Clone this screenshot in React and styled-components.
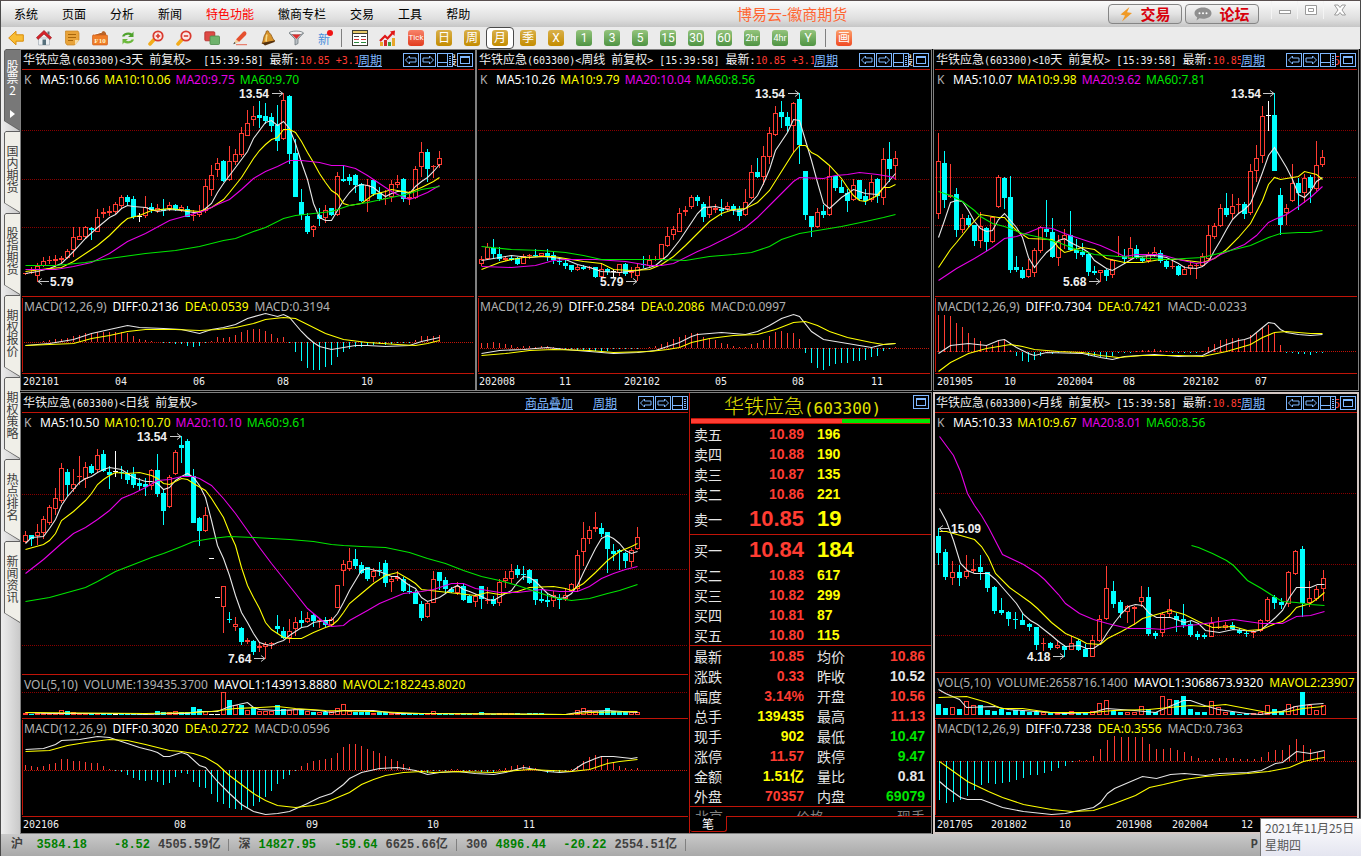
import React from 'react'
import styled, { createGlobalStyle, css } from 'styled-components';

const RED = '#ff3c32';
const CYAN = '#00ffff';
const YELLOW = '#ffff00';
const GREEN = '#00e600';
const MAGENTA = '#e600e6';
const WHITE = '#e6e6e6';
const GREY = '#b0b0b0';
const LINE = '#c01408';
const BLUE = '#7fb8ff';

// Chart figures are kept on a grid three times finer than the screen.
const px = (v) => Math.round(v / 3);

/* ---------- chart data ---------- */
// candle: colour, high, body top, body bottom, low

const threeDay = {
    period: '3天 前复权> ',
    x: 76, step: 18, left: 22,
    legend: ['10.66', '10.06', '9.75', '9.70'],
    candles: `r668,668,671,674 r650,666,668,672 r640,649,678,695 r622,633,648,650 r618,630,633,642 r615,628,632,650 r618,624,630,640 r598,603,625,628 r531,562,600,620 r532,559,569,571
        r528,532,560,566 c531,534,539,570 r477,500,545,546 r474,487,493,505 r468,484,489,497 r455,463,487,491 r435,441,469,474 c435,441,455,466 c438,447,500,506 w490,498,500,516
        r438,472,497,503 c458,472,480,490 r462,475,482,490 c447,478,482,497 r456,465,478,482 c461,466,480,484 r464,472,480,486 c468,478,500,502 r480,494,499,512 r465,485,494,500
        r388,409,482,488 r345,374,421,438 r323,340,361,380 c330,333,392,395 r288,333,391,392 r297,313,335,345 r230,250,314,320 r180,220,257,258 r168,199,209,228 c152,195,204,234
        c160,198,212,222 c190,201,228,246 c165,226,272,302 r130,151,266,270 c134,138,311,342 c268,310,440,441 c416,456,494,510 c490,498,545,552 r525,529,539,560 c474,495,507,528
        r466,481,503,518 c474,475,494,498 r366,377,494,497 c346,387,393,396 c373,381,393,406 c371,376,404,428 c399,402,452,455 r388,405,454,486 c390,391,431,437 c412,428,448,452
        r420,444,447,466 r390,403,441,456 r375,397,406,414 c384,388,446,455 r424,440,446,464 r348,358,443,447 r276,307,352,380 c297,306,357,396 r344,348,351,384 r302,325,346,354`,
    ma: [
        [WHITE, '0,668 2,664 4,653 6,638 8,604 10,563 12,530 14,500 15,492 16,473 17,466 18,468 20,472 22,484 24,478 26,480 28,485 29,486 30,474 31,458 32,425 33,398 34,374 36,328 37,302 38,264 39,240 40,217 41,211 42,224 43,214 44,235 45,280 46,335 47,388 48,460 49,500 50,511 51,511 52,480 53,450 54,427 55,408 56,403 57,406 58,410 59,426 60,437 61,430 62,424 63,424 64,428 65,408 66,392 67,382 68,362 69,341'],
        [YELLOW, '0,663 4,655 6,650 8,632 10,610 12,584 14,555 16,520 17,503 19,495 21,479 24,475 27,480 29,482 31,470 33,446 34,425 36,380 38,325 39,300 40,282 41,268 42,260 43,238 44,236 45,247 46,272 47,305 48,335 49,368 50,396 51,420 52,433 53,458 54,464 55,462 56,458 58,432 60,424 61,416 63,422 64,427 66,412 68,392 69,382'],
        [MAGENTA, '0,658 5,656 8,649 11,635 14,610 17,573 20,548 24,511 27,495 30,480 32,463 34,448 36,418 38,385 40,362 42,348 43,338 44,331 46,331 49,335 51,345 53,346 55,355 57,375 59,398 61,422 63,440 64,446 65,442 67,425 69,406'],
        [GREEN, '0,646 5,646 10,637 14,625 20,608 25,599 29,589 33,570 35,563 38,542 40,530 43,505 45,496 48,490 51,482 54,465 57,457 61,440 64,430 66,418 69,409'],
    ],
    grid: [241, 388, 532],
    marks: [
        { text: '13.54', x: 718, y: 144, from: 816, to: 848, at: 130 },
        { text: '5.79', x: 150, y: 708, from: 147, to: 114, at: 693 },
    ],
    macd: {
        values: ['0.2136', '0.0539', '0.3194'], base: 877,
        bars: '876 875 876 873 870 868 866 864 858 854 850 848 847 846 846 846 847 849 858 866 870 873 876 880 880 881 881 887 890 887 880 872 862 864 861 855 846 840 837 837 842 852 863 860 880 906 933 953 960 960 950 944 921 905 897 891 890 887 886 882 885 883 880 880 880 870 858 857 858 856',
        diff: '0,886 4,879 8,868 11,850 14,837 17,826 19,831 23,833 26,838 29,850 31,836 33,832 35,822 37,804 40,790 42,797 43,793 44,802 45,822 46,842 47,861 48,877 49,889 51,898 52,893 55,884 57,886 60,888 64,886 66,873 69,862',
        dea: '0,886 4,883 8,878 11,865 14,855 17,843 20,836 25,836 29,841 32,838 35,830 38,820 40,806 43,802 45,805 47,823 50,850 53,868 57,877 62,883 65,884 67,878 69,871',
    },
    dates: [['202101', 70], ['04', 344], ['06', 578], ['08', 830], ['10', 1082]],
};

const weekly = {
    period: '周线 前复权>',
    x: 16, step: 18, left: 2,
    legend: ['10.26', '9.79', '10.04', '8.56'],
    candles: `r617,628,643,648 r579,591,628,630 c567,593,611,628 c590,612,626,632 r617,623,629,632 c615,624,629,633 c620,625,642,644 r612,617,641,642 r611,615,617,628 c598,616,618,622
        r608,610,618,622 c598,608,618,634 c605,616,630,642 c624,634,637,645 c630,640,648,657 c644,646,660,666 r645,650,659,662 c645,650,656,661 r648,651,655,660 c651,652,680,684
        r640,658,680,683 c653,658,667,676 w658,664,667,680 r641,643,670,678 c640,642,671,677 r650,664,670,684 r640,651,678,694 c618,643,646,655 r614,630,647,650 r618,626,628,632
        r582,583,626,628 r532,557,587,592 r528,538,554,570 r474,490,545,546 r468,481,485,498 r435,442,472,476 c435,441,453,468 c456,461,500,516 r438,472,496,504 r462,475,481,490
        c447,477,482,497 r456,468,477,482 c462,468,480,494 c468,478,498,513 r417,455,494,498 r345,367,445,448 c324,367,381,384 r289,319,380,404 r231,250,322,342 r168,190,256,258
        c152,186,201,234 c187,201,228,246 r156,160,227,308 c130,147,284,342 c364,364,494,510 c497,499,530,560 r474,487,530,534 c465,484,495,503 r344,379,494,497 c376,379,413,424
        c390,411,428,430 c418,428,452,486 r388,405,450,454 c390,391,446,452 c418,438,452,464 r375,397,451,456 c384,388,437,460 r294,328,443,465 c276,328,356,396 r303,325,349,390`,
    ma: [
        [WHITE, '0,630 3,620 5,616 8,622 10,618 12,620 14,628 16,643 18,652 20,662 23,665 26,660 28,652 29,645 31,615 33,571 35,516 36,490 37,470 39,468 41,478 43,482 44,474 46,435 47,400 48,358 49,300 51,245 52,206 53,211 54,270 55,330 56,395 57,458 58,475 60,440 62,416 64,430 66,432 67,412 69,368'],
        [YELLOW, '0,658 3,635 5,626 7,620 10,618 12,618 14,625 17,632 20,640 22,656 25,661 28,657 30,642 32,618 34,585 36,548 38,512 40,490 42,477 44,474 46,457 48,420 50,362 52,306 53,284 54,286 55,305 56,315 57,330 58,344 60,385 61,410 62,435 63,451 64,452 66,435 67,412 68,412 69,403'],
        [MAGENTA, '0,647 5,650 9,644 12,630 14,626 19,628 24,634 28,645 30,645 32,640 34,622 36,602 38,588 40,570 42,553 44,530 46,500 48,465 50,428 52,392 53,380 57,385 59,376 61,373 63,367 66,371 68,377 69,384'],
        [GREEN, '0,589 5,596 10,600 14,605 17,616 20,628 26,628 30,626 34,629 38,617 42,613 45,606 48,588 50,568 53,548 56,540 60,528 64,514 67,502 69,493'],
    ],
    grid: [241, 388, 532],
    marks: [
        { text: '13.54', x: 838, y: 144, from: 936, to: 969, at: 130 },
        { text: '5.79', x: 373, y: 708, from: 450, to: 484, at: 693 },
    ],
    macd: {
        values: ['0.2584', '0.2086', '0.0997'], base: 895,
        bars: '880 878 876 879 882 884 890 888 887 890 887 888 891 898 898 898 899 900 900 902 903 902 898 898 898 898 898 893 891 888 882 875 868 862 856 850 849 860 866 870 879 882 888 892 892 882 879 870 857 846 843 849 849 866 909 939 953 960 948 942 939 939 933 932 930 921 917 902 898 891',
        diff: '0,909 3,901 7,897 11,892 14,897 18,902 22,908 26,905 29,900 31,888 33,877 35,858 36,851 40,847 44,852 46,842 48,825 50,803 52,793 53,799 55,843 57,868 60,876 63,885 65,891 67,883 69,878',
        dea: '0,916 4,909 8,901 12,897 18,900 22,905 28,904 31,898 33,890 35,875 38,864 42,856 46,853 49,838 52,817 54,814 56,824 58,843 61,860 65,876 67,881 69,880',
    },
    dates: [['202008', 10], ['11', 248], ['202102', 445], ['05', 716], ['08', 949], ['11', 1184]],
};

const tenDay = {
    period: '10天 前复权>',
    x: 19, step: 18, left: 3,
    legend: ['10.07', '9.98', '9.62', '7.81'],
    candles: `r249,334,491,506 c303,339,450,474 r342,436,440,445 c414,432,540,560 r491,504,539,550 c495,503,525,530 c525,526,573,588 r486,528,572,594 c530,534,576,604 r501,502,575,578
        r375,382,472,474 c380,384,444,478 c377,441,660,669 c618,651,661,666 c651,660,684,687 r627,658,680,684 r594,601,668,680 r527,532,602,610 c450,537,546,562 c504,546,621,624
        r555,572,624,648 r537,555,570,598 c483,555,601,604 c566,600,609,627 c578,605,615,620 c610,612,666,678 c647,663,669,675 r659,661,668,695 c658,660,678,693 r627,631,674,685
        r558,617,619,622 c597,617,627,636 r561,595,626,630 c584,597,624,628 c622,624,634,636 r606,615,633,640 r590,607,615,622 c600,609,633,639 c630,634,651,657 r633,649,652,656
        c646,648,675,678 r648,658,674,675 r633,646,657,675 r640,645,648,687 r609,618,648,650 r525,556,628,632 r520,529,562,568 r462,475,529,530 c429,475,494,500 r432,468,492,506
        r444,463,466,492 c457,463,492,508 r342,364,490,494 r285,323,364,396 r168,199,319,340 w153,195,197,242 c130,195,362,363 c414,435,525,555 r462,475,490,525 r342,400,454,456
        c384,399,429,480 r372,384,428,460 c375,381,413,460 r272,346,418,422 r300,322,344,350`,
    ma: [
        [WHITE, '0,560 1,510 2,455 3,450 4,452 5,480 6,512 7,534 8,542 9,541 10,508 11,490 12,510 13,530 14,560 15,620 16,652 17,628 18,605 19,590 20,570 21,565 22,577 24,595 25,606 26,630 28,655 29,660 31,640 33,617 36,616 38,620 40,638 41,652 43,654 44,648 45,634 46,600 47,570 48,538 49,508 50,490 51,478 52,460 53,415 54,365 55,315 56,290 57,320 58,350 59,388 60,432 61,442 62,424 63,392 64,380'],
        [YELLOW, '0,652 1,625 2,596 3,577 5,530 7,493 10,500 11,502 12,522 13,540 15,565 19,568 20,592 21,606 24,592 26,596 28,624 31,637 34,637 37,628 40,628 44,636 46,625 48,598 50,560 52,520 54,450 55,402 56,382 57,388 60,377 61,364 63,373 64,386'],
        [MAGENTA, '0,690 3,655 6,624 9,590 11,563 13,558 15,546 17,532 19,535 21,550 24,568 27,585 30,610 31,618 33,612 37,612 40,628 43,640 45,634 47,612 49,598 51,582 53,555 55,517 56,507 58,492 60,468 62,442 64,408'],
        [GREEN, '0,422 2,434 4,452 6,480 7,498 9,520 11,527 14,548 17,560 20,577 23,598 26,612 30,618 38,626 44,620 48,602 52,585 55,560 57,548 60,546 62,547 64,541'],
    ],
    grid: [241, 382, 526],
    marks: [
        { text: '13.54', x: 896, y: 144, from: 993, to: 1027, at: 130 },
        { text: '5.68', x: 394, y: 708, from: 470, to: 504, at: 693 },
    ],
    macd: {
        values: ['0.7304', '0.7421', '-0.0233'], base: 905,
        bars: '796 796 798 819 832 848 864 873 885 884 874 868 900 917 932 936 930 918 909 911 908 902 908 909 912 917 918 920 924 918 909 908 908 902 899 899 896 901 902 908 908 908 908 908 902 891 882 870 868 863 864 868 855 848 832 824 846 885 908 908 912 911 915 909 908',
        diff: '0,908 2,884 5,878 8,886 10,870 11,867 13,890 15,908 16,914 18,905 24,909 27,922 29,926 31,918 36,912 40,917 44,915 46,898 48,882 50,870 51,868 52,860 54,832 55,815 56,820 57,836 58,845 60,853 62,856 64,853',
        dea: '0,962 2,935 5,908 8,893 12,883 14,887 16,897 20,904 24,906 27,914 30,921 34,916 40,916 44,917 48,903 52,882 54,862 56,846 58,844 62,850 64,850',
    },
    dates: [['201905', 14], ['10', 216], ['202004', 376], ['08', 574], ['202102', 754], ['07', 970]],
};

const daily = {
    period: '日线 前复权>',
    x: 76, step: 18, left: 22,
    legend: ['10.50', '10.70', '10.10', '9.61'],
    candles: `r423,436,455,458 c434,435,447,468 r402,425,438,466 r378,388,428,448 r345,352,398,404 r294,325,358,376 r219,235,334,338 c238,246,285,318 r237,283,296,306 r198,258,260,285
        r216,232,266,294 c222,228,249,252 r177,196,241,250 c180,192,242,246 c228,246,254,297 w183,243,246,261 c228,247,249,268 c240,252,270,282 c231,252,285,294 c265,280,288,304
        c264,282,290,318 r238,241,289,300 c192,240,312,320 c300,309,363,405 r255,262,350,354 r180,185,253,256 c138,165,174,218 c147,153,258,262 c237,257,399,400 c380,384,423,468
        r351,376,422,426 w504,504,507,507 w621,621,624,624 r588,589,650,730 c666,687,691,700 r681,703,710,722 c712,714,756,765 r744,751,757,762 c749,753,785,795 r756,768,775,786
        r756,763,770,806 r757,760,762,777 c675,708,717,728 c711,722,744,748 r687,724,744,760 r681,695,717,738 c662,690,699,712 r666,685,697,700 c673,676,693,711 r684,690,692,715
        c682,694,706,710 r680,686,704,708 r585,586,653,655 r510,523,544,588 r474,514,538,544 c477,507,528,537 c516,525,549,552 c531,532,567,572 r534,544,560,575 c516,540,543,558
        c510,519,579,590 r558,567,577,606 r543,562,568,573 c560,567,602,606 c582,603,607,612 c600,606,642,642 c633,642,684,693 r636,640,680,684 r543,568,638,639 c545,546,573,600
        c561,570,597,612 c590,597,607,610 r576,588,608,616 c580,588,630,634 c616,618,639,640 r612,618,637,651 c588,589,627,657 r591,630,634,642 c618,627,642,648 r567,577,640,648
        r543,565,574,594 r522,544,568,580 c525,537,555,564 c528,552,555,570 c536,540,579,582 c566,567,630,645 c600,627,632,639 c612,630,636,651 r602,615,632,651 c613,626,628,657
        r594,616,628,633 r580,583,602,606 r480,496,598,603 r396,445,485,528 r408,421,446,462 r366,412,416,426 c399,414,431,440 c426,427,476,550 c462,483,492,513 c477,480,487,540
        c486,489,513,534 r474,481,517,530 r411,442,476,480`,
    ma: [
        [WHITE, '0,460 1,440 3,439 4,415 5,388 6,346 7,318 8,296 9,276 10,263 11,259 12,245 13,236 14,232 16,236 17,250 18,262 20,273 21,274 22,280 23,298 24,290 25,270 26,257 27,248 28,260 29,285 30,320 31,390 32,465 33,505 34,555 35,615 36,665 37,695 38,730 39,755 40,762 41,766 42,757 43,749 44,735 45,722 46,711 47,708 48,696 50,690 51,691 52,670 53,635 54,600 55,570 56,540 57,535 59,543 61,558 62,558 64,585 65,595 66,620 67,634 69,622 70,610 71,595 72,584 73,596 74,604 76,618 77,628 78,630 80,610 81,600 82,575 83,559 84,560 85,574 86,590 87,608 88,618 89,625 90,622 91,610 92,585 93,545 94,510 95,475 96,443 97,436 98,444 99,458 100,480 101,488 102,484'],
        [YELLOW, '0,478 3,461 4,450 5,430 6,390 8,364 10,330 11,308 12,282 13,266 14,254 15,247 17,248 19,247 21,255 22,265 23,280 24,281 26,264 27,266 28,280 30,300 31,325 33,380 34,425 35,465 36,530 37,585 38,620 39,655 40,695 41,718 42,728 43,742 44,745 46,744 48,727 50,712 51,705 52,690 53,665 54,640 56,610 58,580 60,555 62,547 64,567 65,580 66,596 69,602 72,610 75,616 77,606 79,612 82,603 84,590 88,589 90,594 91,600 93,580 95,545 97,510 99,484 101,468 102,460'],
        [MAGENTA, '0,550 3,508 6,458 8,430 10,410 12,386 14,360 16,325 18,308 20,290 22,270 24,266 26,258 28,258 29,265 31,285 33,325 35,370 37,420 39,470 41,520 43,565 45,610 47,655 49,683 50,700 51,709 53,704 54,690 57,660 59,640 61,625 63,608 66,602 68,598 71,578 73,580 75,594 79,606 82,606 86,598 89,603 92,602 94,588 96,565 98,548 100,536 102,529'],
        [GREEN, '0,634 4,622 7,607 10,590 12,572 15,544 18,523 21,500 23,489 26,467 28,454 31,443 34,439 38,442 44,447 48,452 51,462 53,465 56,467 60,472 64,485 67,505 70,520 73,540 76,558 79,570 82,585 85,602 88,621 91,631 94,625 97,608 99,600 102,583'],
    ],
    grid: [313, 538, 766],
    marks: [
        { text: '13.54', x: 412, y: 153, from: 510, to: 543, at: 139 },
        { text: '7.64', x: 684, y: 819, from: 763, to: 796, at: 805 },
    ],
    vol: {
        values: ['139435.3700', '143913.8880', '182243.8020'], base: 974, grid: 907,
        bars: '969 972 970 968 968 968 961 963 967 968 968 970 968 968 969 971 971 971 971 971 971 971 963 966 966 964 967 966 951 956 962 971 971 905 931 945 945 961 951 962 962 963 946 957 960 958 960 963 966 965 966 962 955 943 963 965 965 965 969 967 966 970 970 969 969 970 969 971 964 969 970 971 971 970 971 971 966 971 971 970 970 969 970 971 970 969 970 971 971 971 971 971 961 955 960 962 964 954 964 965 965 965 966',
        ma1: '0,965 4,969 10,968 16,970 20,973 24,970 27,968 29,963 32,963 34,948 37,937 38,950 39,957 42,960 46,957 49,961 51,967 53,960 58,960 62,968 70,970 90,972 93,964 97,961 102,967',
        ma2: '0,967 20,968 28,966 31,962 35,955 39,952 42,949 45,955 50,960 58,964 66,970 90,972 94,966 102,964',
    },
    macd: {
        values: ['0.3020', '0.2722', '0.0596'], base: 1141,
        bars: '1125 1129 1131 1129 1122 1119 1107 1107 1113 1113 1116 1118 1119 1128 1137 1144 1147 1154 1163 1169 1172 1169 1175 1185 1179 1160 1150 1152 1175 1190 1194 1212 1235 1242 1254 1257 1259 1254 1247 1235 1220 1202 1181 1167 1154 1144 1129 1119 1114 1110 1107 1104 1089 1071 1062 1062 1068 1077 1083 1089 1098 1107 1113 1122 1131 1144 1150 1148 1144 1144 1144 1138 1138 1144 1144 1144 1145 1146 1145 1138 1134 1128 1125 1125 1128 1134 1144 1148 1147 1146 1144 1138 1128 1113 1101 1095 1098 1107 1117 1128 1134 1137 1133',
        diff: '0,1076 3,1075 5,1063 6,1051 9,1046 12,1037 14,1041 16,1053 19,1072 21,1080 22,1087 23,1099 24,1099 26,1087 27,1093 29,1124 30,1132 32,1173 34,1210 36,1243 38,1264 40,1271 42,1270 44,1262 47,1240 49,1220 51,1210 53,1183 54,1163 56,1145 59,1133 62,1132 65,1141 67,1153 69,1145 72,1142 75,1149 78,1151 80,1145 83,1132 87,1142 89,1147 91,1142 93,1120 95,1103 96,1097 98,1098 101,1105 102,1102',
        dea: '0,1084 4,1080 7,1066 10,1055 14,1048 17,1050 20,1062 22,1070 24,1081 26,1084 28,1090 30,1102 32,1123 34,1155 36,1183 38,1210 40,1230 42,1245 45,1250 48,1246 50,1236 52,1222 54,1205 56,1183 58,1166 60,1156 63,1145 66,1144 68,1147 72,1144 78,1147 84,1138 91,1142 94,1137 97,1120 99,1112 102,1108',
    },
    dates: [['202106', 70], ['08', 523], ['09', 919], ['10', 1280], ['11', 1569]],
};

const monthly = {
    period: '月线 前复权>',
    x: 19, step: 21, left: 3,
    legend: ['10.33', '9.67', '8.01', '8.56'],
    candles: `c414,438,488,525 c477,486,561,570 r513,547,563,585 c525,546,563,588 r495,543,560,567 r507,537,544,549 c495,531,547,570 c546,546,594,606 c588,591,662,672 c624,660,668,675
        c663,666,687,708 c666,687,691,717 c669,690,705,706 c700,702,711,722 c711,712,765,780 r744,759,763,783 c756,759,774,780 r754,766,773,777 c764,767,780,801 r738,759,779,780
        c746,752,780,783 c763,776,801,801 r735,751,800,801 r676,688,752,756 r528,595,686,690 c573,603,642,654 c630,635,669,684 r645,648,665,699 r648,652,656,705 r588,622,637,651
        c591,621,732,738 c724,730,738,746 r666,673,728,740 r627,658,671,682 c668,679,690,726 c642,688,705,714 c693,703,735,741 c723,732,741,750 c729,735,741,747 r681,699,740,742
        r681,710,713,717 r696,706,713,720 c697,706,718,720 c715,720,729,732 c723,729,733,741 r720,723,730,744 r687,691,722,726 r621,628,692,695 c615,621,640,657 c624,636,645,657
        r543,547,641,651 r480,484,551,555 c468,478,638,681 r573,625,640,651 r588,598,626,633 r540,565,596,633`,
    ma: [
        [WHITE, '0,354 1,392 2,450 3,520 4,540 5,549 7,549 8,567 9,590 11,640 12,672 13,690 14,703 16,735 17,754 18,768 20,765 21,773 22,773 23,760 24,725 25,695 26,668 27,647 28,641 29,645 30,668 31,681 33,682 35,695 36,691 37,700 38,720 40,727 42,717 45,722 46,718 48,680 49,660 50,620 51,590 53,590 54,581 55,583'],
        [YELLOW, '0,422 1,424 3,435 5,448 6,468 7,500 8,548 10,590 12,620 13,635 14,655 16,695 18,728 20,748 21,760 23,762 24,745 26,722 28,700 29,685 31,673 33,660 35,673 37,692 39,710 42,707 44,720 46,718 48,700 49,692 50,675 51,652 53,640 54,625 55,606'],
        [MAGENTA, '0,138 2,195 3,243 4,310 5,345 6,375 7,410 9,493 12,522 14,550 15,568 17,612 18,638 20,668 22,688 24,698 27,715 30,714 32,716 34,709 37,701 40,693 42,688 46,699 49,700 51,679 53,676 55,664'],
        [GREEN, '36,466 37,470 39,490 41,510 42,525 44,570 46,595 48,620 49,632 51,637 53,641 55,646'],
    ],
    grid: [310, 523, 736],
    marks: [
        { text: '15.09', x: 58, y: 428, from: 52, to: 22, at: 415 },
        { text: '4.18', x: 285, y: 812, from: 362, to: 395, at: 799 },
    ],
    vol: {
        values: ['2658716.1400', '3068673.9320', '23907'], base: 974, grid: 907,
        bars: '942 954 952 957 934 945 946 960 962 956 966 961 963 966 965 967 966 968 965 962 966 966 962 940 931 964 966 965 965 949 957 966 919 927 930 918 957 966 966 934 951 967 966 971 969 970 967 946 957 963 943 948 906 946 961 946',
        ma1: '0,897 1,910 3,927 4,951 8,948 10,957 14,962 18,968 22,967 24,955 28,960 31,965 33,948 35,930 36,931 38,944 40,957 42,962 44,968 46,971 49,963 51,948 53,942 55,940',
        ma2: '0,922 4,918 7,936 9,954 12,955 16,965 22,967 25,960 30,958 33,950 36,945 38,947 41,942 44,955 47,967 50,963 52,955 55,949',
    },
    macd: {
        values: ['0.7238', '0.3556', '0.7363'], base: 1114,
        bars: '1230 1239 1235 1230 1218 1200 1185 1178 1182 1179 1176 1170 1164 1155 1155 1149 1143 1134 1128 1117 1111 1109 1098 1077 1050 1038 1040 1041 1041 1041 1062 1077 1077 1074 1080 1086 1098 1104 1110 1106 1104 1104 1104 1107 1107 1107 1101 1086 1080 1080 1065 1047 1065 1077 1085 1082',
        diff: '0,1173 1,1192 3,1220 4,1226 6,1228 9,1250 12,1263 16,1271 18,1270 22,1250 23,1235 24,1210 25,1194 27,1176 29,1159 31,1165 33,1153 35,1149 38,1156 40,1150 44,1147 46,1139 48,1120 49,1117 51,1083 53,1088 55,1081',
        dea: '0,1114 2,1143 4,1173 7,1204 9,1222 12,1241 16,1257 19,1262 22,1260 25,1240 28,1214 30,1190 32,1181 35,1166 38,1159 44,1150 47,1144 50,1131 52,1112 54,1105 55,1100',
    },
    dates: [['201705', 14], ['201802', 176], ['10', 380], ['201908', 553], ['202004', 721], ['12', 926]],
};

/* ---------- quote data ---------- */

const asks = [['卖五', '10.89', '196'], ['卖四', '10.88', '190'], ['卖三', '10.87', '135'], ['卖二', '10.86', '221'], ['卖一', '10.85', '19']];
const bids = [['买一', '10.84', '184'], ['买二', '10.83', '617'], ['买三', '10.82', '299'], ['买四', '10.81', '87'], ['买五', '10.80', '115']];

const stats = [
    ['最新', '10.85', RED, '均价', '10.86', RED],
    ['涨跌', '0.33', RED, '昨收', '10.52', WHITE],
    ['幅度', '3.14%', RED, '开盘', '10.56', RED],
    ['总手', '139435', YELLOW, '最高', '11.13', RED],
    ['现手', '902', YELLOW, '最低', '10.47', GREEN],
    ['涨停', '11.57', RED, '跌停', '9.47', GREEN],
    ['金额', '1.51亿', YELLOW, '量比', '0.81', WHITE],
    ['外盘', '70357', RED, '内盘', '69079', GREEN],
];

const indices = [
    { name: '沪', value: '3584.18', change: '-8.52', amount: '4505.59亿', width: 56 },
    { name: '深', value: '14827.95', change: '-59.64', amount: '6625.66亿', width: 56 },
    { name: '300', value: '4896.44', change: '-20.22', amount: '2554.51亿', width: 48 },
];

const menus = ['系统', '页面', '分析', '新闻', '特色功能', '徽商专栏', '交易', '工具', '帮助'];
const railTabs = ['股票2', '国内期货', '股指期货', '期权报价', '期权策略', '热点排名', '新闻资讯'];

const periods = [
    ['Tick', 'red'], ['日', 'gold'], ['周', 'gold'], ['月', 'gold'], ['季', 'gold'], ['X', 'gold'],
    ['1', 'green'], ['3', 'green'], ['5', 'green'], ['15', 'green'], ['30', 'green'], ['60', 'green'],
    ['2hr', 'green'], ['4hr', 'green'], ['Y', 'green'],
];

/* ---------- text helper ---------- */

// Half-width runs are set in a narrow mono so that two of them fill one Han cell.
function Mixed({ children }) {
    return children.split(/([\u4e00-\u9fff]+)/).filter(Boolean).map((part, i) => (
        /[\u4e00-\u9fff]/.test(part) ? part : <HalfWidth key={i}>{part}</HalfWidth>
    ));
}

/* ---------- chart drawing ---------- */

const parseCandles = (text) => text.trim().split(/\s+/).map((item) => {
    const [high, top, bottom, low] = item.slice(1).split(',').map((v) => px(v));
    return { kind: item[0], high, top, bottom, low };
});

const colours = { r: RED, c: CYAN, w: '#ffffff' };

function Curve({ chart, points, color, shift = 0 }) {
    const path = points.split(' ').map((pair) => {
        const [i, y] = pair.split(',').map(Number);
        return `${px(chart.x + chart.step * i) - chart.left + shift + 0.5},${px(y) + 0.5}`;
    }).join(' ');
    return <polyline points={path} fill="none" stroke={color} strokeWidth="1.1" />
}

function GridLine({ y, color = '#880000' }) {
    return <line x1="0" x2="100%" y1={px(y) + 0.5} y2={px(y) + 0.5} stroke={color} strokeDasharray="1 1" shapeRendering="crispEdges" />
}

function Mark({ mark, left }) {
    const y = px(mark.at) + 0.5;
    const from = px(mark.from) - left;
    const to = px(mark.to) - left;
    const back = to > from ? to - 4 : to + 4;
    return (
        <g>
            <path d={`M${from} ${y}H${to}M${back} ${y - 3}L${to} ${y}L${back} ${y + 3}`} fill="none" stroke="#c8c8c8" />
            <MarkText x={px(mark.x) - left} y={px(mark.y)}>{mark.text}</MarkText>
        </g>
    )
}

function PricePlot({ chart, top }) {
    return (
        <Plot aria-hidden="true">
            <g transform={`translate(0 ${-top})`}>
                {chart.grid.map((y) => <GridLine key={y} y={y} />)}
                {parseCandles(chart.candles).map((c, i) => {
                    const x = px(chart.x + chart.step * i) - chart.left;
                    const height = Math.max(c.bottom - c.top, 1);
                    const color = colours[c.kind];
                    if (c.kind !== 'r' || height < 3) {
                        return (
                            <g key={i} fill={color} shapeRendering="crispEdges">
                                <rect x={x} y={c.high} width="1" height={Math.max(c.low - c.high, 1)} />
                                <rect x={x - 2} y={c.top} width="5" height={height} />
                            </g>
                        )
                    }
                    return (
                        <g key={i} fill={color} shapeRendering="crispEdges">
                            <rect x={x} y={c.high} width="1" height={Math.max(c.top - c.high, 0)} />
                            <rect x={x} y={c.bottom} width="1" height={Math.max(c.low - c.bottom, 0)} />
                            <rect x={x - 1.5} y={c.top + 0.5} width="4" height={height - 1} fill="none" stroke={color} />
                        </g>
                    )
                })}
                {chart.ma.map(([color, points]) => (
                    <Curve key={color} chart={chart} points={points} color={color} shift={chart.step === 21 ? 1 : 0} />
                ))}
                {chart.marks.map((mark) => <Mark key={mark.text} mark={mark} left={chart.left} />)}
            </g>
        </Plot>
    )
}

function VolumePlot({ chart, top }) {
    const kinds = parseCandles(chart.candles);
    return (
        <Plot aria-hidden="true">
            <g transform={`translate(0 ${-top})`}>
                <GridLine y={chart.vol.grid} />
                {chart.vol.bars.split(' ').map((v, i) => {
                    const x = px(chart.x + chart.step * i) - chart.left;
                    const y = px(v);
                    const height = px(chart.vol.base) - y;
                    const color = colours[kinds[i].kind];
                    return kinds[i].kind === 'r' && height > 2
                        ? <rect key={i} x={x - 1.5} y={y + 0.5} width="4" height={height - 1} fill="none" stroke={color} shapeRendering="crispEdges" />
                        : <rect key={i} x={x - 2} y={y} width="5" height={height} fill={color} shapeRendering="crispEdges" />
                })}
                <Curve chart={chart} points={chart.vol.ma1} color={WHITE} />
                <Curve chart={chart} points={chart.vol.ma2} color={YELLOW} />
            </g>
        </Plot>
    )
}

function MacdPlot({ chart, top }) {
    const { base, bars, diff, dea } = chart.macd;
    const shift = chart.step === 21 ? 1 : 0;
    return (
        <Plot aria-hidden="true">
            <rect x="0" y="1" width="1" height="calc(100% - 2px)" fill={LINE} />
            <g transform={`translate(0 ${-top})`}>
                <GridLine y={base - 1} color="#c01408" />
                {bars.split(' ').map((v, i) => {
                    const y = Math.min(px(v), px(base));
                    const height = Math.abs(px(v) - px(base));
                    return <rect key={i} x={px(chart.x + chart.step * i) - chart.left + shift} y={y} width="1" height={height} fill={v < base ? RED : CYAN} shapeRendering="crispEdges" />
                })}
                <Curve chart={chart} points={diff} color={WHITE} shift={shift} />
                <Curve chart={chart} points={dea} color={YELLOW} shift={shift} />
            </g>
        </Plot>
    )
}

/* ---------- panel ---------- */

function FrameIcon({ kind }) {
    return (
        <FrameButton aria-label={kind}>
            <svg width="16" height="14" fill="none" stroke={BLUE} shapeRendering="crispEdges">
                <rect x="0.5" y="0.5" width="15" height="13" />
                {kind === 'left' && <path d="M2.5 7L6.5 3V5H13V9H6.5V11Z" shapeRendering="auto" />}
                {kind === 'right' && <path d="M13.5 7L9.5 3V5H3V9H9.5V11Z" shapeRendering="auto" />}
                {kind === 'split' && <path d="M1 9.5H10.5M10.5 1V13M12 3.5H14M12 5.5H14M12 7.5H14M12 9.5H14M12 11.5H14" />}
                {kind === 'full' && <path d="M3.5 3.5H12.5V10.5H3.5ZM3 4.5H13" />}
            </svg>
        </FrameButton>
    )
}

function Panel({ chart, quote, heights, starts, clock = true, sliver, active, children }) {
    const [ma5, ma10, ma20, ma60] = chart.legend;
    return (
        <PanelFrame $active={active} $wide={Boolean(children)} $last={chart.left === 3}>
            <ChartColumn>
                <PanelHeader $flush={Boolean(children)}>
                    <PanelTitle>
                        <Mixed>{`华铁应急(603300)<${chart.period}`}</Mixed>
                        {clock && <Mixed>{' [15:39:58] 最新:'}</Mixed>}
                        {clock && <RedText><Mixed>{quote}</Mixed></RedText>}
                    </PanelTitle>
                    <HeaderLinks>
                        {!clock && <HeaderLink href="#overlay">商品叠加</HeaderLink>}
                        <HeaderLink href="#period">周期</HeaderLink>
                    </HeaderLinks>
                    <FrameIcons>
                        <FrameIcon kind="left" />
                        <FrameIcon kind="right" />
                        <FrameIcon kind="split" />
                    </FrameIcons>
                    {clock && <Sliver $red={sliver === '5'}>{sliver}</Sliver>}
                    {clock && <FrameIcon kind="full" />}
                </PanelHeader>
                <Pane $height={heights[0]}>
                    <PricePlot chart={chart} top={starts[0]} />
                    <Legend>
                        <KMark>K</KMark>
                        <LegendItem $color="#ffffff">MA5:{ma5}</LegendItem>
                        <LegendItem $color={YELLOW}>MA10:{ma10}</LegendItem>
                        <LegendItem $color={MAGENTA}>MA20:{ma20}</LegendItem>
                        <LegendItem $color={GREEN}>MA60:{ma60}</LegendItem>
                    </Legend>
                </Pane>
                {chart.vol && (
                    <Pane $height={heights[1]}>
                        <VolumePlot chart={chart} top={starts[1]} />
                        <Legend $loose $low={Boolean(children)}>
                            <LegendItem $color={GREY}>VOL(5,10)</LegendItem>
                            <LegendItem $color={GREY}>VOLUME:{chart.vol.values[0]}</LegendItem>
                            <LegendItem $color="#ffffff">MAVOL1:{chart.vol.values[1]}</LegendItem>
                            <LegendItem $color={YELLOW}>MAVOL2:{chart.vol.values[2]}</LegendItem>
                        </Legend>
                    </Pane>
                )}
                <Pane $height={heights[2]}>
                    <MacdPlot chart={chart} top={starts[2]} />
                    <Legend $loose>
                        <LegendItem $color={GREY}>MACD(12,26,9)</LegendItem>
                        <LegendItem $color="#ffffff">DIFF:{chart.macd.values[0]}</LegendItem>
                        <LegendItem $color={YELLOW}>DEA:{chart.macd.values[1]}</LegendItem>
                        <LegendItem $color={GREY}>MACD:{chart.macd.values[2]}</LegendItem>
                    </Legend>
                </Pane>
                <Axis>
                    {chart.dates.map(([label, x]) => <AxisText key={x} x={px(x) - chart.left} y="11">{label}</AxisText>)}
                </Axis>
            </ChartColumn>
            {children}
        </PanelFrame>
    )
}

function BookRow({ row, big }) {
    const [label, price, size] = row;
    return (
        <QuoteRow $big={big}>
            <th scope="row">{label}</th>
            <Figure $color={RED} $big={big}>{price}</Figure>
            <Figure $color={YELLOW} $big={big} $left>{size}</Figure>
        </QuoteRow>
    )
}

function Quote() {
    return (
        <QuoteFrame>
            <QuoteTitle>
                <h1>华铁应急<HalfWidth>(603300)</HalfWidth></h1>
                <FrameIcon kind="full" />
            </QuoteTitle>
            <Ratio><i /><b /></Ratio>
            <QuoteTable>
                <tbody>{asks.map((row, i) => <BookRow key={row[0]} row={row} big={i === 4} />)}</tbody>
            </QuoteTable>
            <QuoteTable>
                <tbody>{bids.map((row, i) => <BookRow key={row[0]} row={row} big={i === 0} />)}</tbody>
            </QuoteTable>
            <QuoteTable>
                <tbody>
                    {stats.map(([a, av, ac, b, bv, bc]) => (
                        <QuoteRow key={a}>
                            <th scope="row">{a}</th>
                            <Figure $color={ac}>{av}</Figure>
                            <StatLabel scope="row">{b}</StatLabel>
                            <StatFigure $color={bc}>{bv}</StatFigure>
                        </QuoteRow>
                    ))}
                </tbody>
            </QuoteTable>
            <TradeHead><span>北京</span><span>价格</span><span>现手</span></TradeHead>
            <TradeTabs>
                <TradeTab>笔</TradeTab>
                <TradeRest />
            </TradeTabs>
        </QuoteFrame>
    )
}

/* ---------- tool bar ---------- */

const tools = [
    ['后退', <path key="a" d="M.7 8L8 1.2V4.800H15.300V11.200H8V14.800Z" fill="#f8bd35" stroke="#d98e0c" />],
    ['首页', <g key="b"><path d="M2.5 8H13.5V15H2.5Z" fill="#eceff2" stroke="#9aa5ad" strokeWidth=".6" /><path d="M8 .5L15.5 7.5L14 9.5L8 4L2 9.5L.5 7.5Z" fill="#d8232a" stroke="#8e1218" strokeWidth=".6" /><path d="M11.5 1.5H13.5V5L11.5 3.5Z" fill="#5b6b74" /><path d="M6.5 9.5H10V15H6.5Z" fill="#56707c" /></g>],
    ['公告', <g key="c"><path d="M1.5 1H14L15 3V10L10.5 15H3L1.5 13Z" fill="#e8a33a" stroke="#c98421" strokeWidth=".7" /><path d="M4 4.5H12M4 7.5H12M4 10.5H9" stroke="#a8660b" /><path d="M15 10H11V15Z" fill="#f8dca2" /></g>],
    ['F10', <g key="d"><path d="M1 5L12 1L14 3V6H1Z" fill="#b8652b" /><path d="M2 4.5L10 2" stroke="#fff" /><rect x=".5" y="5" width="15" height="10" rx="1" fill="#ef7d28" stroke="#c95412" strokeWidth=".6" /><text x="8" y="13" textAnchor="middle" fontSize="7" fontWeight="bold" fill="#fff3c8" fontFamily="Liberation Serif, serif">F10</text></g>],
    ['刷新', <g key="e"><path d="M2 6.5C3 2.5 9 1.5 12 3.5L13.5 1.5V7H8L10 5.2C7.5 4.2 5 5 4.5 6.5Z" fill="#4ea22c" /><path d="M14 9.5C13 13.5 7 14.5 4 12.5L2.5 14.5V9H8L6 10.8C8.5 11.8 11 11 11.5 9.5Z" fill="#6cb93c" /></g>],
    ['放大', <g key="f"><path d="M6.5 9L2 14" stroke="#f3ac1b" strokeWidth="3.5" strokeLinecap="round" /><circle cx="10" cy="6" r="4.7" fill="#fbe9e7" stroke="#d93a2f" strokeWidth="1.8" /><path d="M7.8 6H12.2M10 3.8V8.2" stroke="#d93a2f" strokeWidth="1.6" /></g>],
    ['缩小', <g key="g"><path d="M6.5 9L2 14" stroke="#f3ac1b" strokeWidth="3.5" strokeLinecap="round" /><circle cx="10" cy="6" r="4.7" fill="#fbe9e7" stroke="#d93a2f" strokeWidth="1.8" /><path d="M7.8 6H12.2" stroke="#d93a2f" strokeWidth="1.6" /></g>],
    ['叠加', <g key="h"><rect x=".8" y="1.8" width="10" height="9" rx="1" fill="#de4a45" stroke="#b02b28" strokeWidth=".8" /><rect x="6" y="6" width="9.5" height="8.5" rx="1" fill="#6fb26c" stroke="#4c8c4a" strokeWidth=".8" /></g>],
    ['画线', <g key="i"><path d="M4 9.5L11 2Q12.5 .5 14 2Q15 3.5 14 5L7 12Z" fill="#e5502f" /><path d="M4 9.5L7 12L1.5 14Z" fill="#f1cf9a" /><path d="M2.6 12L3.6 13.2L1.2 14.2Z" fill="#333" /><path d="M4 14.7H15" stroke="#e86a55" /></g>],
    ['预警', <g key="j"><path d="M6 1.5C7.5 0 9 1 9 2.5C12.5 5 11.5 8.5 15 11L2 13.5C4 10.5 3 6 6 3Z" fill="#d9952b" stroke="#8d5716" strokeWidth=".8" /><path d="M7 4.5C6 7 6.5 9 6 11.5" stroke="#f8dc8e" strokeWidth="1.6" fill="none" /><path d="M2 13L14.5 10.5L14.5 12L5 15.5Z" fill="#54310e" /></g>],
    ['筛选', <g key="k"><path d="M1 3L7 9V15L10 13.5V9L15.5 3Z" fill="#b9bfc4" stroke="#70787d" strokeWidth=".8" /><ellipse cx="8.2" cy="3" rx="7" ry="1.9" fill="#f3f3f3" stroke="#70787d" strokeWidth=".8" /><path d="M4 4.5H12.5L8.5 9Z" fill="#df2f2f" /></g>],
];

const ListIcon = () => (
    <svg width="18" height="16" shapeRendering="crispEdges">
        <rect x="1" y="0" width="16" height="16" fill="#3e3e33" />
        <rect x="2" y="4" width="14" height="11" fill="#fff" />
        <rect x="2" y="1" width="14" height="2" fill="#e6c867" />
        <path d="M3 6.5H8M10 6.5H15" stroke="#444" />
        <path d="M3 9.5H8M10 9.5H15" stroke="#d33" />
        <path d="M3 12.5H8M10 12.5H15" stroke="#2a8a3a" />
    </svg>
);

const TrendIcon = () => (
    <svg width="18" height="16">
        <path d="M1 12H4V16H1ZM13 8H16V16H13Z" fill="#e8a62a" />
        <path d="M5 10H8V16H5Z" fill="#d02828" />
        <path d="M9 12H12V16H9Z" fill="#3f9d3a" />
        <path d="M1 11L6 6L8.5 8.5L14 2.5" fill="none" stroke="#e01818" strokeWidth="2.2" />
        <path d="M16 .5L15.5 6L11 1.5Z" fill="#e01818" />
    </svg>
);

function ToolBar() {
    return (
        <ToolRow>
            {tools.map(([label, drawing]) => (
                <ToolButton key={label} aria-label={label}><svg width="16" height="16">{drawing}</svg></ToolButton>
            ))}
            <NewButton>新</NewButton>
            <ToolDivider />
            <ToolButton aria-label="列表"><ListIcon /></ToolButton>
            <ToolButton aria-label="走势"><TrendIcon /></ToolButton>
            {periods.map(([label, tone]) => (
                <ToolButton key={label} $on={label === '月'}><Chip $tone={tone} $size={label.length}>{label}</Chip></ToolButton>
            ))}
            <ToolDivider />
            <ToolButton><Chip $tone="orange" $size={1}>画</Chip></ToolButton>
        </ToolRow>
    )
}

function TitleBar() {
    return (
        <TitleRow>
            <Menu>
                {menus.map((name) => <MenuButton key={name} $hot={name === '特色功能'}>{name}</MenuButton>)}
            </Menu>
            <AppName>博易云-徽商期货</AppName>
            <BigButton>
                <svg width="14" height="16"><path d="M10.500 1L1.500 8.500L6 9.500L3 15.500L13 7L8 6.200Z" fill="#f09a26" /></svg>
                交易
            </BigButton>
            <BigButton>
                <svg width="18" height="14">
                    <path d="M9 .5C14 .5 17.5 3 17.5 6.3C17.5 9.5 14 11.8 9 11.8C7.5 11.8 6.5 11.6 5.5 11.3L2.5 13.5L3.2 10.3C1.5 9.3 .5 8 .5 6.3C.5 3 4 .5 9 .5Z" fill="#8f8f8f" />
                    <circle cx="5.5" cy="6.2" r="1" fill="#fff" /><circle cx="9" cy="6.2" r="1" fill="#fff" /><circle cx="12.5" cy="6.2" r="1" fill="#fff" />
                </svg>
                论坛
            </BigButton>
            <WindowButtons>
                <WindowButton aria-label="最小化"><svg width="14" height="12"><rect x="1.5" y="6.5" width="11" height="3" fill="#fff" stroke="#9a9a9a" /></svg></WindowButton>
                <WindowButton aria-label="最大化"><svg width="14" height="12"><path d="M1.5 1.5H12.5V10.5H1.5ZM4.5 4.5H9.5V7.5H4.5Z" fill="#fff" stroke="#9a9a9a" /></svg></WindowButton>
                <WindowButton $close aria-label="关闭"><svg width="14" height="12"><path d="M1.5 1H5L7 3.5L9 1H12.5L9 6L12.5 11H9L7 8.5L5 11H1.5L5 6Z" fill="#fff" stroke="#9a9a9a" /></svg></WindowButton>
            </WindowButtons>
        </TitleRow>
    )
}

const topHeights = [227, 0, 77];
const topStarts = [20, 0, 247];

function App() {
    return (
        <>
            <GlobalStyle />
            <Window>
                <TitleBar />
                <ToolBar />
                <Body>
                    <Rail>
                        {railTabs.map((name, i) => (
                            <RailTab key={name}>
                                <RailFace $on={i === 0}>
                                    {name.split('').map((c, n) => <span key={n}>{c}</span>)}
                                    {i === 0 && <RailArrow width="5" height="8"><path d="M0 0L5 4L0 8Z" fill="#fff" /></RailArrow>}
                                </RailFace>
                            </RailTab>
                        ))}
                    </Rail>
                    <Board>
                        <Panel chart={threeDay} quote="10.85 +3.1" heights={topHeights} starts={topStarts} sliver="最" />
                        <Panel chart={weekly} quote="10.85 +3.1" heights={topHeights} starts={topStarts} sliver="最" />
                        <Panel chart={tenDay} quote="10.85" heights={topHeights} starts={topStarts} sliver="5" />
                        <Panel chart={daily} heights={[262, 44, 98]} starts={[23, 285, 329]} clock={false}>
                            <Quote />
                        </Panel>
                        <Panel chart={monthly} quote="10.85" heights={[260, 46, 98]} starts={[23, 283, 329]} sliver="5" active />
                    </Board>
                </Body>
                <StatusBar>
                    {indices.map((item) => (
                        <IndexGroup key={item.name}>
                            <span>{item.name}</span>
                            <IndexValue $width={item.width}>{item.value}</IndexValue>
                            <IndexChange>{item.change}</IndexChange>
                            <span>{item.amount}</span>
                        </IndexGroup>
                    ))}
                    <StatusTail>P</StatusTail>
                </StatusBar>
                <DateTip>2021年11月25日<br />星期四</DateTip>
            </Window>
        </>
    )
}

/* ---------- styles ---------- */

const GlobalStyle = createGlobalStyle`
    * { box-sizing: border-box; }
    body {
        margin: 0;
        background: #ebebeb;
        font-family: 'Noto Sans CJK SC', sans-serif;
        font-size: 12px;
    }
    button {
        padding: 0;
        border: 0;
        background: none;
        font: inherit;
        color: inherit;
    }
`;

const Window = styled.div`
    position: relative;
    border: 1px solid #4a4a4a;
    border-top-color: #5a5050;
    border-bottom: 0;
    background: #d4d4d4;
`;

const TitleRow = styled.header`
    display: flex;
    align-items: center;
    height: 26px;
    background: linear-gradient(#fbfbfb, #dedede 70%, #c6c6c6);
`;

const Menu = styled.nav`
    display: flex;
    padding-left: 1px;
`;

const MenuButton = styled.button`
    padding: 0 12px;
    line-height: 28px;
    color: ${({ $hot }) => ($hot ? '#ff0000' : '#000000')};
`;

const AppName = styled.div`
    flex: 1;
    padding-right: 6px;
    text-align: center;
    font-size: 15px;
    line-height: 26px;
    color: #ff6633;
`;

const BigButton = styled.button`
    display: flex;
    align-items: center;
    justify-content: center;
    gap: 7px;
    width: 74px;
    height: 20px;
    margin-right: 3px;
    border: 1px solid #858585;
    border-radius: 4px;
    background: linear-gradient(#f4f4f4, #e2e2e2 50%, #c4c4c4);
    font-size: 15px;
    line-height: 18px;
    font-weight: 700;
    color: #d8000c;
`;

const WindowButtons = styled.div`
    display: flex;
    align-self: flex-start;
    padding: 0 4px 0 9px;
`;

const WindowButton = styled.button`
    display: flex;
    align-items: center;
    justify-content: center;
    width: ${({ $close }) => ($close ? 33 : 26)}px;
    height: 18px;
    border-left: 1px solid #f4f4f4;
`;

const ToolRow = styled.div`
    display: flex;
    align-items: center;
    height: 22px;
    padding-left: 1px;
    background: #ebebeb;
`;

const ToolButton = styled.button`
    display: flex;
    align-items: center;
    justify-content: center;
    width: 28px;
    height: 22px;

    ${({ $on }) => $on && css`
        border: 1px solid #4a4a4a;
        border-radius: 4px;
        background: #ffffff;
    `}
`;

const NewButton = styled(ToolButton)`
    position: relative;
    color: #4a90dc;

    &::after {
        content: '';
        position: absolute;
        top: 3px;
        right: 5px;
        width: 6px;
        height: 6px;
        border-radius: 50%;
        background: #f01414;
    }
`;

const ToolDivider = styled.span`
    width: 1px;
    height: 18px;
    margin: 0 4px 0 3px;
    background: #808080;
`;

const tones = {
    red: 'linear-gradient(#f8836a, #e23c1e)',
    orange: 'linear-gradient(#fba06c, #f04a22)',
    gold: 'linear-gradient(#d9b04a, #c48c00)',
    green: 'linear-gradient(#94c47c, #4f9443)',
};

const chipSizes = { 1: 12, 2: 12, 3: 9, 4: 8 };

const Chip = styled.span`
    width: 16px;
    height: 16px;
    border-radius: 3px;
    background: ${({ $tone }) => tones[$tone]};
    font-family: Roboto, 'Noto Sans CJK SC', sans-serif;
    font-size: ${({ $size }) => chipSizes[$size]}px;
    line-height: 16px;
    text-align: center;
    color: #ffffff;
`;

const Body = styled.div`
    display: flex;
    background: #000000;
`;

const Rail = styled.aside`
    width: 19px;
    padding-left: 3px;
    background: linear-gradient(90deg, #ededed, #c9c9c9);
`;

const RailTab = styled.button`
    display: block;
    width: 16px;
    height: 82px;
    padding: 1px 0 1px 1px;
    background: #606060;
    clip-path: polygon(2px 0, 100% 0, 100% 100%, 0 72px, 0 2px);
`;

const RailFace = styled.span`
    display: flex;
    flex-direction: column;
    align-items: center;
    height: 80px;
    padding-top: ${({ $on }) => ($on ? 10 : 13)}px;
    background: ${({ $on }) => ($on ? '#787878' : '#f0efe8')};
    clip-path: polygon(1px 0, 100% 0, 100% 100%, 0 71px, 0 1px);
    line-height: 12px;
    color: ${({ $on }) => ($on ? '#ffffff' : '#3c3c3c')};
`;

const RailArrow = styled.svg`
    margin-top: 14px;
`;

const Board = styled.main`
    flex: 1;
    display: grid;
    grid-template-columns: minmax(0, 456fr) minmax(0, 456fr) minmax(0, 427fr);
    row-gap: 1px;
    min-width: 0;
    padding-right: 1px;
`;

const PanelFrame = styled.section`
    display: flex;
    min-width: 0;
    border: 1px solid #808080;
    background: #000000;
    grid-column: ${({ $wide }) => ($wide ? 'span 2' : 'auto')};
    margin-left: ${({ $last }) => ($last ? 1 : 0)}px;

    ${({ $active }) => $active && css`
        border-color: #d4c8c4;
        outline: 1px solid #d4c8c4;
        outline-offset: -2px;
    `}
`;

const ChartColumn = styled.div`
    flex: 1;
    min-width: 0;
`;

const PanelHeader = styled.div`
    display: flex;
    align-items: center;
    height: 20px;
    margin: 0 1px;
    padding: 0 ${({ $flush }) => ($flush ? 0 : 1)}px 0 1px;
    border-bottom: 1px solid ${LINE};
    color: #f0f0f0;
`;

const PanelTitle = styled.h2`
    flex: 1;
    min-width: 0;
    margin: 0;
    overflow: hidden;
    font-size: 12px;
    font-weight: 400;
    line-height: 18px;
    white-space: pre;
`;

const HalfWidth = styled.span`
    font-family: 'DejaVu Sans Mono', monospace;
    font-size: 10px;
`;

const RedText = styled.span`
    color: ${RED};
`;

const HeaderLinks = styled.div`
    display: flex;
    gap: 20px;
    margin-right: 21px;
`;

const HeaderLink = styled.a`
    line-height: 18px;
    color: ${BLUE};
    text-decoration: underline;
`;

const FrameIcons = styled.div`
    display: flex;
    gap: 1px;
`;

const FrameButton = styled.button`
    display: block;
    flex: none;
    width: 16px;
    height: 14px;

    svg {
        display: block;
    }
`;

const Sliver = styled.span`
    display: flex;
    justify-content: flex-end;
    width: 4px;
    overflow: hidden;
    line-height: 18px;
    color: ${({ $red }) => ($red ? RED : '#f0f0f0')};
`;

const Pane = styled.div`
    display: grid;
    height: ${({ $height }) => $height}px;
    margin: 0 1px;
    overflow: hidden;
    border-bottom: 1px solid ${LINE};

    > * {
        grid-area: 1 / 1;
        min-width: 0;
    }
`;

const Plot = styled.svg`
    display: block;
    width: 100%;
    height: 100%;
`;

const MarkText = styled.text`
    font: bold 12px 'Liberation Sans', sans-serif;
    fill: #f0f0f0;
`;

const Legend = styled.div`
    display: flex;
    align-self: start;
    gap: ${({ $loose }) => ($loose ? 6 : 5)}px;
    padding: 0 0 0 2px;
    font-family: 'Noto Sans', sans-serif;
    line-height: 20px;
    white-space: nowrap;
`;

const LegendItem = styled.span`
    color: ${({ $color }) => $color};
`;

const KMark = styled.span`
    width: 11px;
    color: ${GREY};
`;

const Axis = styled.svg`
    display: block;
    width: calc(100% - 2px);
    height: 16px;
    margin: 0 1px;
`;

const AxisText = styled.text`
    font: 10px 'DejaVu Sans Mono', monospace;
    fill: #f0f0f0;
`;

const QuoteFrame = styled.div`
    flex: none;
    width: 242px;
    border-left: 1px solid ${LINE};
`;

const QuoteTitle = styled.div`
    display: flex;
    justify-content: space-between;
    height: 25px;
    padding: 2px 2px 0 0;

    h1 {
        flex: 1;
        margin: 0;
        padding-left: 2px;
        font-size: 20px;
        font-weight: 300;
        line-height: 22px;
        text-align: center;
        color: #e0e000;
    }

    ${HalfWidth} {
        font-size: 16px;
    }
`;

const Ratio = styled.div`
    display: flex;
    height: 6px;
    margin: 0 1px;
    border: solid ${LINE};
    border-width: 1px 0;

    i {
        flex: 150;
        background: ${RED};
    }

    b {
        flex: 88;
        background: ${GREEN};
    }
`;

const QuoteTable = styled.table`
    width: 100%;
    border-collapse: separate;
    border-spacing: 0;
    border-bottom: 1px solid ${LINE};
    table-layout: fixed;
    font-size: 14px;
    color: ${WHITE};
`;

const QuoteRow = styled.tr`
    height: ${({ $big }) => ($big ? 30 : 20)}px;
    line-height: 20px;

    th {
        width: 40px;
        padding: 0 0 0 4px;
        font-weight: 400;
        text-align: left;
    }
`;

const Figure = styled.td`
    width: ${({ $left }) => ($left ? 'auto' : '74px')};
    padding: 0 0 0 ${({ $left }) => ($left ? 13 : 0)}px;
    font-family: 'Liberation Sans', 'Noto Sans CJK SC', sans-serif;
    font-size: ${({ $big }) => ($big ? 22 : 14)}px;
    font-weight: 700;
    text-align: ${({ $left }) => ($left ? 'left' : 'right')};
    color: ${({ $color }) => $color};
`;

const StatLabel = styled.th`
    && {
        width: 56px;
        padding-left: 13px;
    }
`;

const StatFigure = styled(Figure)`
    width: auto;
    padding-right: 6px;
`;

const TradeHead = styled.div`
    display: flex;
    justify-content: space-between;
    height: 9px;
    padding: 2px 6px 0 5px;
    overflow: hidden;
    font-size: 14px;
    line-height: 14px;
    color: #808080;
`;

const TradeTabs = styled.div`
    display: flex;
`;

const TradeTab = styled.button`
    width: 37px;
    height: 16px;
    border: solid ${LINE};
    border-width: 0 1px 1px 0;
    border-radius: 0 0 3px 3px;
    line-height: 14px;
    color: #ffffff;
`;

const TradeRest = styled.div`
    flex: 1;
    border-top: 1px solid ${LINE};
`;

const StatusBar = styled.footer`
    display: flex;
    align-items: center;
    height: 22px;
    padding: 0 102px 0 10px;
    background: linear-gradient(#c9c9c9, #a9a9a9);
    font-family: 'Liberation Mono', 'Noto Sans CJK SC', monospace;
    font-weight: 700;
    color: #404040;
`;

const IndexGroup = styled.div`
    display: flex;
    margin-right: 9px;
    padding-right: 8px;
    border-right: 1px solid #808080;
    line-height: 12px;
`;

const IndexValue = styled.span`
    width: ${({ $width }) => $width}px;
    margin-left: 8px;
    text-align: right;
    color: #008000;
`;

const IndexChange = styled.span`
    width: 63px;
    margin-right: 8px;
    text-align: right;
    color: #008000;
`;

const StatusTail = styled.span`
    flex: 1;
    text-align: right;
`;

const DateTip = styled.div`
    position: absolute;
    right: -1px;
    bottom: 0;
    width: 101px;
    height: 38px;
    padding: 0 0 0 4px;
    border: 1px solid #767676;
    border-width: 1px 0 0 1px;
    background: linear-gradient(#ffffff, #e4e5f0);
    line-height: 17px;
    color: #575757;
`;

export default App
